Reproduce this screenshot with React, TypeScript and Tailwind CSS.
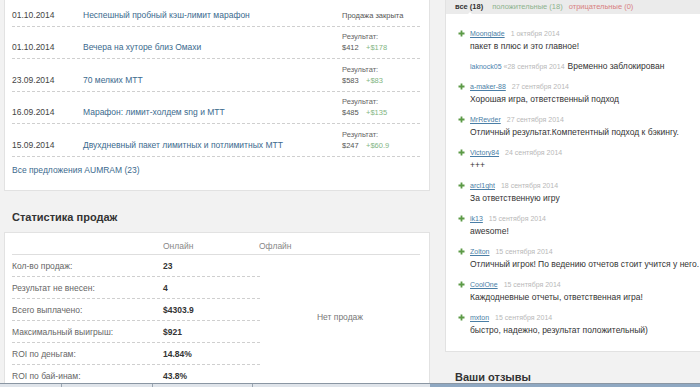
import React from "react";

const offers = [
  { date: "01.10.2014", title: "Неспешный пробный кэш-лимит марафон", closed: true },
  { date: "01.10.2014", title: "Вечера на хуторе близ Омахи", res: "$412", plus: "+$178" },
  { date: "23.09.2014", title: "70 мелких МТТ", res: "$583", plus: "+$83" },
  { date: "16.09.2014", title: "Марафон: лимит-холдем sng и МТТ", res: "$485", plus: "+$135" },
  { date: "15.09.2014", title: "Двухдневный пакет лимитных и потлимитных МТТ", res: "$247", plus: "+$60.9" },
];

const stats = [
  ["Кол-во продаж:", "23"],
  ["Результат не внесен:", "4"],
  ["Всего выплачено:", "$4303.9"],
  ["Максимальный выигрыш:", "$921"],
  ["ROI по деньгам:", "14.84%"],
  ["ROI по бай-инам:", "43.8%"],
];

type Review = { user: string; date: string; text: string; reply?: boolean };

const reviews: Review[] = [
  { user: "Moonglade", date: "1 октября 2014", text: "пакет в плюс и это главное!" },
  { user: "laknock05", date: "«28 сентября 2014", text: "Временно заблокирован", reply: true },
  { user: "a-maker-88", date: "27 сентября 2014", text: "Хорошая игра, ответственный подход" },
  { user: "MrRevder", date: "27 сентября 2014", text: "Отличный результат.Компетентный подход к бэкингу." },
  { user: "Victory84", date: "24 сентября 2014", text: "+++" },
  { user: "arcl1ght", date: "18 сентября 2014", text: "За ответственную игру" },
  { user: "ik13", date: "15 сентября 2014", text: "awesome!" },
  { user: "Zolton", date: "15 сентября 2014", text: "Отличный игрок! По ведению отчетов стоит учится у него." },
  { user: "CoolOne", date: "15 сентября 2014", text: "Каждодневные отчеты, ответственная игра!" },
  { user: "mxton", date: "15 сентября 2014", text: "быстро, надежно, результат положительный)" },
];

function Plus() {
  return (
    <svg width="7" height="7" viewBox="0 0 7 7" className="block">
      <path d="M3.5 0.5v6M0.5 3.5h6" stroke="#5c9a46" strokeWidth="1.8" />
    </svg>
  );
}

export default function App() {
  return (
    <div className="w-[700px] h-[387px] overflow-hidden bg-[#f2f2f2] flex flex-col font-['Liberation_Sans',Arial,sans-serif]">
      <div className="h-[383px] flex items-start overflow-hidden">
        {/* Left column */}
        <div className="ml-[4px] w-[426px] shrink-0 flex flex-col">
          <div className="bg-white border-x border-b border-[#e2e2e2] pl-[7px] pr-[9px]">
            <div className="mt-[-6px]">
              {offers.map((o, i) => (
                <div
                  key={i}
                  className="grid grid-cols-[71px_1fr_78px] h-[32.5px] items-end pb-[5px] border-b border-dashed border-[#cfcfcf]"
                >
                  <div className="text-[8.5px] leading-[11px] text-[#444]">{o.date}</div>
                  <div className="text-[8.5px] leading-[11px] text-[#3b6a8e]">{o.title}</div>
                  <div className="text-[7.5px] leading-[11px] text-[#666]">
                    {o.closed ? (
                      <div className="text-[#555]">Продажа закрыта</div>
                    ) : (
                      <>
                        <div>Результат:</div>
                        <div>
                          <span className="inline-block w-[24px] text-[#555]">{o.res}</span>
                          <span className="text-[#82b582]">{o.plus}</span>
                        </div>
                      </>
                    )}
                  </div>
                </div>
              ))}
            </div>
            <div className="pt-[8px] pb-[14px] text-[8.5px] leading-[11px] text-[#3b6a8e]">
              Все предложения AUMRAM (23)
            </div>
          </div>

          <div className="mt-[19px] mb-[8px] pl-[8px] text-[11px] leading-[14px] font-bold text-[#333]">
            Статистика продаж
          </div>

          <div className="bg-white border border-[#e2e2e2] pl-[7px] pr-[9px]">
            <div className="flex h-[22px] items-end pb-[2px] border-b border-[#dedede] text-[8.5px] leading-[11px] text-[#888]">
              <div className="w-[151px]" />
              <div className="w-[96px]">Онлайн</div>
              <div className="flex-1">Офлайн</div>
            </div>
            <div className="flex">
              <div className="w-[248px]">
                {stats.map(([l, v], i) => (
                  <div
                    key={i}
                    className="flex h-[22px] items-center pt-[2px] border-b border-dashed border-[#cfcfcf] text-[8.5px] leading-[11px]"
                  >
                    <div className="w-[151px] text-[#666]">{l}</div>
                    <div className="flex-1 font-bold text-[#333]">{v}</div>
                  </div>
                ))}
              </div>
              <div className="flex-1 flex items-center justify-center pb-[6px] text-[8.5px] text-[#777]">
                Нет продаж
              </div>
            </div>
          </div>
        </div>

        {/* Right column */}
        <div className="ml-[15px] w-[270px] shrink-0 flex flex-col">
          <div className="border-x border-b border-[#e2e2e2] bg-white">
            <div className="h-[14px] bg-[#ebebeb] flex items-end pb-[2px] pl-[9px] text-[7.5px] leading-[10px]">
              <span className="relative font-bold text-[#333]">
                все (18)
                <span className="absolute left-[12px] top-[10px] w-0 h-0 border-x-[3px] border-x-transparent border-b-[3px] border-b-white" />
              </span>
              <span className="ml-[9px] text-[#8db38d]">положительные (18)</span>
              <span className="ml-[6px] text-[#d88080]">отрицательные (0)</span>
            </div>
            <div className="pt-[13px] pb-[14px] pl-[12px] flex flex-col gap-[7px]">
              {reviews.map((r, i) =>
                r.reply ? (
                  <div key={i} className="pl-[12px] h-[13px] text-[8.5px] leading-[13px] whitespace-nowrap">
                    <span className="text-[7px] text-[#4b7fae]">{r.user}</span>
                    <span className="ml-[2px] text-[7px] text-[#b8b8b8]">{r.date}</span>
                    <span className="ml-[3px] text-[#333]">{r.text}</span>
                  </div>
                ) : (
                  <div key={i} className="flex">
                    <div className="w-[12px] h-[13px] flex items-center">
                      <Plus />
                    </div>
                    <div className="flex flex-col whitespace-nowrap">
                      <div className="h-[13px] text-[7px] leading-[13px]">
                        <span className="text-[#4a7ea6] underline">{r.user}</span>
                        <span className="ml-[6px] text-[#b8b8b8]">{r.date}</span>
                      </div>
                      <div className="h-[13px] text-[8.5px] leading-[13px] text-[#333]">{r.text}</div>
                    </div>
                  </div>
                )
              )}
            </div>
          </div>
          <div className="mt-[18px] pl-[10px] text-[11px] leading-[14px] font-bold text-[#333]">
            Ваши отзывы
          </div>
        </div>
      </div>
      <div className="h-[4px] flex border-t border-[#8a96a3]">
        <div className="w-[62px] bg-[#dfe4ea] border-r border-[#9aa6b2]" />
        <div className="w-[91px] bg-[#dfe4ea] border-r border-[#9aa6b2]" />
        <div className="w-[100px] bg-[#dfe4ea] border-r border-[#9aa6b2]" />
        <div className="w-[177px] bg-[#dfe4ea]" />
        <div className="flex-1 bg-[#8fa8c2]" />
      </div>
    </div>
  );
}
